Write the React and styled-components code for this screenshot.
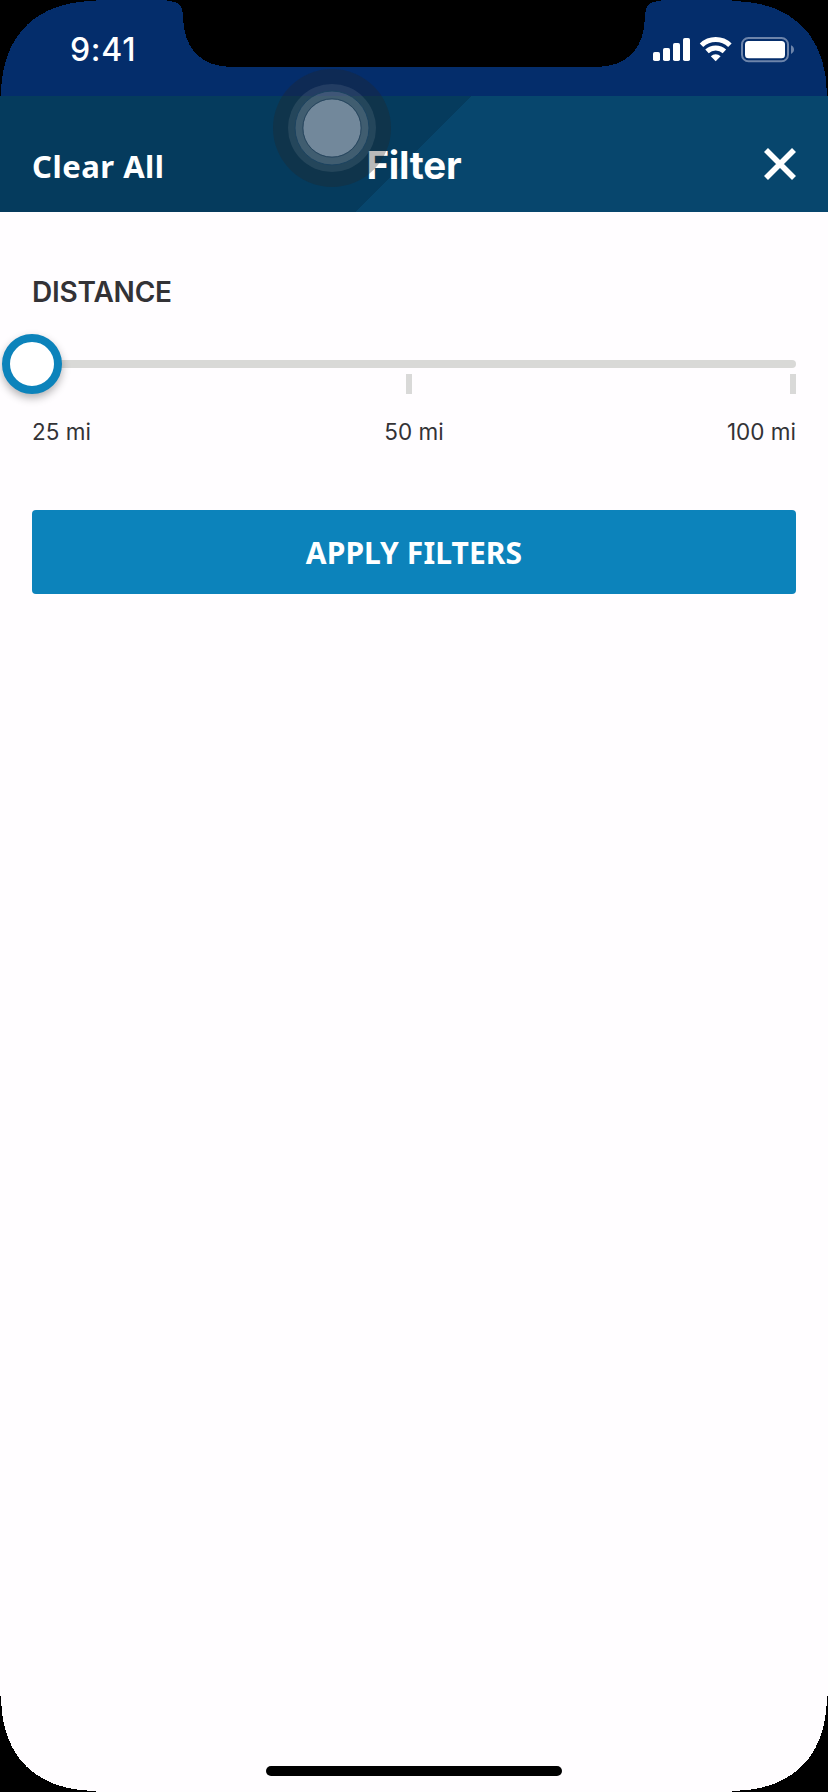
import React from 'react';
import styled, { createGlobalStyle } from 'styled-components';

const GlobalStyle = createGlobalStyle`
  *, *::before, *::after { box-sizing: border-box; }
  body { margin: 0; background: #000; }
`;

const Screen = styled.main`
  position: relative;
  display: flex;
  flex-direction: column;
  width: 828px;
  height: 1792px;
  overflow: hidden;
  background: #fffdff;
  color: #333236;
  font-family: Inter, sans-serif;
`;

const StatusBar = styled.div`
  display: flex;
  justify-content: space-between;
  height: 96px;
  padding: 30px 34px 0 70px;
  background: #042d6b;
`;

const Time = styled.span`
  height: 40px;
  color: #fff;
  font-size: 32px;
  font-weight: 500;
  line-height: 40px;
  letter-spacing: 0.7px;
`;

const StatusIcons = styled.svg`
  display: block;
  width: 142px;
  height: 40px;
`;

const Header = styled.header`
  display: grid;
  grid-template-columns: 1fr auto 1fr;
  height: 116px;
  padding: 0 32px;
  color: #fff;
  background: linear-gradient(135deg, #053b5d 50%, #07466d 50%);
`;

const ClearButton = styled.button`
  justify-self: start;
  height: 44px;
  margin-top: 48px;
  padding: 0;
  border: 0;
  background: none;
  color: inherit;
  font: 700 31px/44px 'Noto Sans', sans-serif;
  letter-spacing: 0.5px;
  white-space: nowrap;
`;

const Title = styled.h1`
  margin: 45px 0 0;
  font-size: 38.5px;
  font-weight: 700;
  line-height: 48px;
  height: 48px;
  letter-spacing: -0.2px;
`;

const CloseButton = styled.button`
  justify-self: end;
  width: 32px;
  height: 32px;
  margin-top: 52px;
  padding: 0;
  border: 0;
  background: none;
  color: inherit;

  svg { display: block; }
`;

const Content = styled.section`
  display: flex;
  flex-direction: column;
  padding: 62px 32px 0;
`;

const SectionTitle = styled.h2`
  margin: 0;
  height: 36px;
  font-size: 28px;
  font-weight: 600;
  line-height: 36px;
  letter-spacing: -0.2px;
`;

const Slider = styled.div`
  display: flex;
  flex-direction: column;
  margin-top: 50px;
`;

const Track = styled.div`
  position: relative;
  height: 8px;
  border-radius: 4px;
  background: #d9d9d7;
`;

const Thumb = styled.div`
  position: absolute;
  top: -26px;
  left: -30px;
  width: 60px;
  height: 60px;
  border: 8px solid #0c83bb;
  border-radius: 50%;
  background: #fff;
  box-shadow: 0 4px 8px rgba(0, 0, 0, 0.3);
`;

const Ticks = styled.div`
  display: flex;
  justify-content: space-between;
  margin-top: 6px;
  padding-left: 374px;
`;

const Tick = styled.span`
  width: 6px;
  height: 20px;
  background: #d9d9d8;
`;

const Labels = styled.div`
  display: grid;
  grid-template-columns: 1fr auto 1fr;
  margin-top: 24px;
  font-size: 22.5px;
  line-height: 28px;
  height: 28px;
`;

const Label = styled.span`
  text-align: ${({ $align }) => $align || 'left'};
`;

const ApplyButton = styled.button`
  height: 84px;
  margin-top: 64px;
  padding: 2px 0 0;
  border: 0;
  border-radius: 4px;
  background: #0c83bb;
  color: #fff;
  font: 700 30px/40px 'Noto Sans', sans-serif;
  letter-spacing: 0.1px;
`;

const TouchIndicator = styled.svg`
  position: absolute;
  top: 68px;
  left: 272px;
  width: 120px;
  height: 120px;
  pointer-events: none;
`;

const DeviceFrame = styled.svg`
  position: absolute;
  inset: 0;
  pointer-events: none;
`;

const HomeIndicator = styled.div`
  align-self: center;
  width: 296px;
  height: 10px;
  margin-top: auto;
  margin-bottom: 16px;
  border-radius: 5px;
  background: #000;
`;

export default function App() {
  return (
    <>
      <GlobalStyle />
      <Screen>
        <StatusBar>
          <Time>9:41</Time>
          <StatusIcons viewBox="652 30 142 40" fill="#fff">
            <rect x="653" y="52" width="7" height="9" rx="1.8" />
            <rect x="663" y="48" width="7" height="13" rx="1.8" />
            <rect x="673" y="43" width="7" height="18" rx="1.8" />
            <rect x="683" y="38" width="7" height="23" rx="1.8" />
            <g fill="none" stroke="#fff" strokeWidth="5">
              <path d="M701.5 45.2a20.5 20.5 0 0 1 28.4 0" />
              <path d="M707 51.4a12.6 12.6 0 0 1 17.4 0" />
            </g>
            <path d="M710.8 56.2a7.2 7.2 0 0 1 9.8 0L715.7 61.2Z" />
            <rect x="742" y="38" width="46" height="23.3" rx="6.5" fill="none" stroke="#6d84aa" strokeWidth="2" />
            <rect x="745" y="41" width="40" height="17.3" rx="3.5" />
            <path d="M791 45.3q3 1.3 3 4.3t-3 4.3Z" fill="#6d84aa" />
          </StatusIcons>
        </StatusBar>
        <Header>
          <ClearButton>Clear All</ClearButton>
          <Title>Filter</Title>
          <CloseButton aria-label="Close">
            <svg width="32" height="32" viewBox="0 0 32 32" stroke="#fff" strokeWidth="5.6">
              <path d="M2 2 30 30M30 2 2 30" />
            </svg>
          </CloseButton>
        </Header>
        <Content>
          <SectionTitle>DISTANCE</SectionTitle>
          <Slider>
            <Track><Thumb /></Track>
            <Ticks><Tick /><Tick /></Ticks>
            <Labels>
              <Label>25 mi</Label>
              <Label $align="center">50 mi</Label>
              <Label $align="right">100 mi</Label>
            </Labels>
          </Slider>
          <ApplyButton>APPLY FILTERS</ApplyButton>
        </Content>
        <HomeIndicator />
        <TouchIndicator viewBox="0 0 120 120">
          <circle cx="60" cy="60" r="59" fill="#252525" fillOpacity="0.32" />
          <circle cx="60" cy="60" r="44" fill="#fff" fillOpacity="0.09" />
          <circle cx="60" cy="60" r="37" fill="#fff" fillOpacity="0.13" />
          <circle cx="60" cy="60" r="28.8" fill="#72889b" />
          <circle cx="60" cy="60" r="37" fill="none" stroke="#1c4360" strokeWidth="1" />
          <circle cx="60" cy="60" r="29.2" fill="none" stroke="#27465f" strokeWidth="1" />
        </TouchIndicator>
        <DeviceFrame width="828" height="1792" viewBox="0 0 828 1792" shapeRendering="crispEdges">
          <path d="M0 0H96V1C40 1 1 32 1 96H0Z" />
          <path d="M828 0H732V1C788 1 827 32 827 96H828Z" />
          <path d="M0 1792H96V1791C40 1791 1 1760 1 1696H0Z" />
          <path d="M828 1792H732V1791C788 1791 827 1760 827 1696H828Z" />
          <path d="M167 0V1C178 1 183 5 183 15C183 48 200 67 233 67H595C628 67 645 48 645 15C645 5 650 1 661 1V0Z" />
        </DeviceFrame>
      </Screen>
    </>
  );
}
